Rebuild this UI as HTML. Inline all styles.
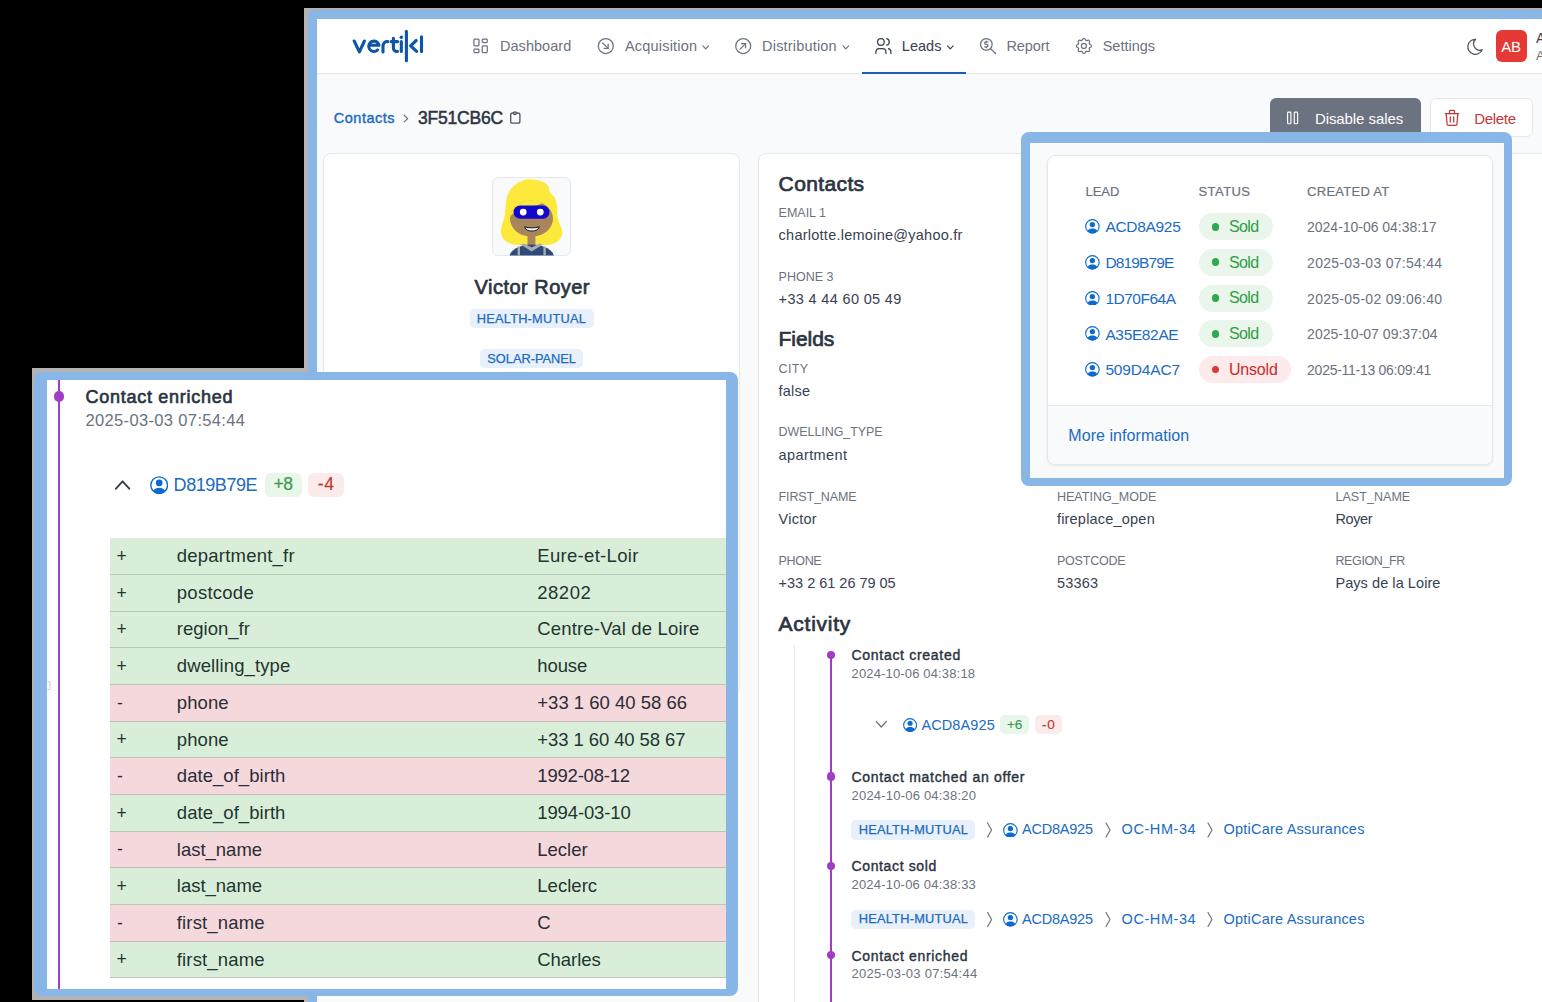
<!DOCTYPE html>
<html><head><meta charset="utf-8"><style>
html,body{margin:0;padding:0;width:1542px;height:1002px;overflow:hidden;background:#000;}
body{position:relative;font-family:"Liberation Sans",sans-serif;}
.a,.t{position:absolute;}
.t{white-space:nowrap;}
</style></head><body>
<div class="a" style="left:0.00px;top:0.00px;width:1542.00px;height:1002.00px;background:#000;"></div>
<div class="a" style="left:304.00px;top:8.00px;width:1238.00px;height:994.00px;background:#b3b3b3;"></div>
<div class="a" style="left:308.00px;top:10.00px;width:1234.00px;height:992.00px;background:#88b7e7;border-top-left-radius:5px;"></div>
<div class="a" style="left:317.00px;top:19.00px;width:1225.00px;height:983.00px;background:#f9fafb;"></div>
<div class="a" style="left:317.00px;top:19.00px;width:1225.00px;height:54.00px;background:#fff;border-bottom:1px solid #e5e7eb;"></div>
<div class="t" style="left:500.00px;top:38.63px;font-size:14.5px;line-height:14.5px;color:#6b7280;letter-spacing:0.033px;">Dashboard</div>
<div class="t" style="left:624.90px;top:38.63px;font-size:14.5px;line-height:14.5px;color:#6b7280;letter-spacing:0.208px;">Acquisition</div>
<div class="t" style="left:762.10px;top:38.63px;font-size:14.5px;line-height:14.5px;color:#6b7280;letter-spacing:0.179px;">Distribution</div>
<div class="t" style="left:901.80px;top:38.63px;font-size:14.5px;line-height:14.5px;color:#374151;letter-spacing:0.024px;">Leads</div>
<div class="t" style="left:1006.40px;top:38.63px;font-size:14.5px;line-height:14.5px;color:#6b7280;letter-spacing:-0.064px;">Report</div>
<div class="t" style="left:1102.70px;top:38.63px;font-size:14.5px;line-height:14.5px;color:#6b7280;">Settings</div>
<div class="a" style="left:861.60px;top:72.00px;width:104.60px;height:2.00px;background:#1a5fb4;"></div>
<div class="a" style="left:1495.50px;top:30.00px;width:31.80px;height:31.60px;background:#e53935;border-radius:6px;"></div>
<div class="t" style="left:1501.20px;top:39.30px;font-size:15px;line-height:15px;color:#fff;letter-spacing:-0.210px;">AB</div>
<div class="t" style="left:1536.00px;top:30.85px;font-size:14px;line-height:14px;color:#374151;">Admin</div>
<div class="t" style="left:1536.00px;top:48.60px;font-size:13px;line-height:13px;color:#6b7280;">Admin</div>
<div class="t" style="left:333.80px;top:110.53px;font-size:14.5px;line-height:14.5px;color:#1b6bbf;-webkit-text-stroke:0.4px #1b6bbf;letter-spacing:0.497px;">Contacts</div>
<div class="t" style="left:418.10px;top:109.89px;font-size:17.5px;line-height:17.5px;color:#2b3441;-webkit-text-stroke:0.5px #2b3441;letter-spacing:-0.225px;">3F51CB6C</div>
<div class="a" style="left:1269.50px;top:98.20px;width:151.50px;height:40.00px;background:#6b7280;border-radius:6px;"></div>
<div class="t" style="left:1314.90px;top:110.80px;font-size:15px;line-height:15px;color:#fff;letter-spacing:-0.076px;">Disable sales</div>
<div class="a" style="left:1429.70px;top:98.20px;width:103.20px;height:39.00px;background:#fff;border-radius:6px;box-sizing:border-box;border:1px solid #e5e7eb;"></div>
<div class="t" style="left:1474.30px;top:110.80px;font-size:15px;line-height:15px;color:#c0393b;letter-spacing:-0.331px;">Delete</div>
<div class="a" style="left:323.30px;top:152.80px;width:416.70px;height:543.20px;background:#fff;border-radius:8px;box-sizing:border-box;border:1px solid #e5e7eb;"></div>
<div class="a" style="left:492.40px;top:177.30px;width:79.00px;height:79.00px;background:#f9fafb;border-radius:6px;box-sizing:border-box;border:1px solid #e5e7eb;"></div>
<svg class="a" style="left:492.40px;top:177.30px;" width="79" height="79" viewBox="0 0 79 79"><defs><clipPath id="avc"><rect x="0.5" y="0.5" width="78" height="78" rx="5.5"/></clipPath><clipPath id="avf"><ellipse cx="39.5" cy="41.7" rx="21.6" ry="18.1"/></clipPath></defs><g clip-path="url(#avc)"><path d="M37.7 2.2 C28 2.5 18 9 15 20 C13 27 14 33 12.5 40 C11 46 7.8 52 9 57 C10.5 63 16 67 24 68 L56 68 C63 67 69.5 63 70.2 57 C70.8 51 66.5 46 65.5 40 C64.8 33 66 26 62.5 20 C60.5 17 57.3 16.5 57.3 13 C58 8 50 2.2 37.7 2.2 Z" fill="#fde93b"/><ellipse cx="39.5" cy="41.7" rx="21.5" ry="18" fill="#a9855c"/><path clip-path="url(#avf)" d="M16 44 C18 38 24 33.5 30.7 32 C38 30 44 28.5 48.3 27 C52 25.5 55 24.5 57.5 22 L58 8 L16 8 Z" fill="#fde93b"/><rect x="35.5" y="57" width="7.9" height="12" fill="#a9855c"/><ellipse cx="39.7" cy="80" rx="22.2" ry="12.5" fill="#2f4a78"/><path d="M28.5 67.6 L39.7 74.6 L51 67.6 L47.5 66.5 L39.7 70.6 L32 66.5 Z" fill="#a4abb3"/><rect x="25.6" y="69.5" width="2.4" height="10" fill="#a4abb3"/><rect x="51.4" y="69.5" width="2.4" height="10" fill="#a4abb3"/><rect x="21.5" y="28.5" width="36" height="13.2" rx="6.6" fill="#1207cc"/><circle cx="31.2" cy="35.1" r="3.4" fill="#fff"/><circle cx="48.3" cy="35.1" r="3.4" fill="#fff"/><path d="M32.6 49.8 C36.5 51.3 43.5 51.3 47.3 49.8 C46.3 55.3 33.6 55.6 32.6 49.8 Z" fill="#fff" stroke="#111" stroke-width="1"/></g></svg>
<div class="t" style="left:474.50px;top:277.07px;font-size:20px;line-height:20px;color:#2b3441;-webkit-text-stroke:0.7px #2b3441;letter-spacing:0.485px;">Victor Royer</div>
<div class="a" style="left:469.60px;top:308.90px;width:124.10px;height:19.40px;background:#e7f0fb;border-radius:5px;"></div>
<div class="t" style="left:476.80px;top:312.66px;font-size:12.8px;line-height:12.8px;color:#1b6bbf;-webkit-text-stroke:0.25px #1b6bbf;letter-spacing:0.213px;">HEALTH-MUTUAL</div>
<div class="a" style="left:480.20px;top:349.10px;width:102.70px;height:19.10px;background:#e7f0fb;border-radius:5px;"></div>
<div class="t" style="left:487.30px;top:352.76px;font-size:12.8px;line-height:12.8px;color:#1b6bbf;-webkit-text-stroke:0.25px #1b6bbf;letter-spacing:-0.008px;">SOLAR-PANEL</div>
<div class="a" style="left:757.70px;top:152.70px;width:800.00px;height:900.00px;background:#fff;border-radius:8px;box-sizing:border-box;border:1px solid #e5e7eb;"></div>
<div class="t" style="left:778.60px;top:172.62px;font-size:21px;line-height:21px;color:#2b3441;-webkit-text-stroke:0.7px #2b3441;letter-spacing:0.375px;">Contacts</div>
<div class="t" style="left:778.60px;top:206.72px;font-size:12.5px;line-height:12.5px;color:#6b7280;letter-spacing:-0.013px;">EMAIL 1</div>
<div class="t" style="left:778.60px;top:228.03px;font-size:14.5px;line-height:14.5px;color:#374151;letter-spacing:0.251px;">charlotte.lemoine@yahoo.fr</div>
<div class="t" style="left:778.60px;top:270.52px;font-size:12.5px;line-height:12.5px;color:#6b7280;">PHONE 3</div>
<div class="t" style="left:778.60px;top:291.73px;font-size:14.5px;line-height:14.5px;color:#374151;letter-spacing:0.336px;">+33 4 44 60 05 49</div>
<div class="t" style="left:778.60px;top:328.42px;font-size:21px;line-height:21px;color:#2b3441;-webkit-text-stroke:0.7px #2b3441;letter-spacing:-0.064px;">Fields</div>
<div class="t" style="left:778.60px;top:362.62px;font-size:12.5px;line-height:12.5px;color:#6b7280;letter-spacing:0.308px;">CITY</div>
<div class="t" style="left:778.60px;top:383.83px;font-size:14.5px;line-height:14.5px;color:#374151;letter-spacing:0.217px;">false</div>
<div class="t" style="left:778.60px;top:426.32px;font-size:12.5px;line-height:12.5px;color:#6b7280;letter-spacing:-0.074px;">DWELLING_TYPE</div>
<div class="t" style="left:778.60px;top:447.83px;font-size:14.5px;line-height:14.5px;color:#374151;letter-spacing:0.389px;">apartment</div>
<div class="t" style="left:778.60px;top:490.92px;font-size:12.5px;line-height:12.5px;color:#6b7280;letter-spacing:-0.142px;">FIRST_NAME</div>
<div class="t" style="left:778.60px;top:511.93px;font-size:14.5px;line-height:14.5px;color:#374151;letter-spacing:0.260px;">Victor</div>
<div class="t" style="left:1056.90px;top:490.92px;font-size:12.5px;line-height:12.5px;color:#6b7280;letter-spacing:0.037px;">HEATING_MODE</div>
<div class="t" style="left:1056.90px;top:511.93px;font-size:14.5px;line-height:14.5px;color:#374151;letter-spacing:0.206px;">fireplace_open</div>
<div class="t" style="left:1335.40px;top:490.92px;font-size:12.5px;line-height:12.5px;color:#6b7280;letter-spacing:0.059px;">LAST_NAME</div>
<div class="t" style="left:1335.40px;top:511.93px;font-size:14.5px;line-height:14.5px;color:#374151;letter-spacing:-0.370px;">Royer</div>
<div class="t" style="left:778.60px;top:554.92px;font-size:12.5px;line-height:12.5px;color:#6b7280;letter-spacing:-0.338px;">PHONE</div>
<div class="t" style="left:778.60px;top:575.93px;font-size:14.5px;line-height:14.5px;color:#374151;letter-spacing:-0.014px;">+33 2 61 26 79 05</div>
<div class="t" style="left:1056.90px;top:554.92px;font-size:12.5px;line-height:12.5px;color:#6b7280;letter-spacing:-0.193px;">POSTCODE</div>
<div class="t" style="left:1056.90px;top:575.93px;font-size:14.5px;line-height:14.5px;color:#374151;letter-spacing:0.244px;">53363</div>
<div class="t" style="left:1335.40px;top:554.92px;font-size:12.5px;line-height:12.5px;color:#6b7280;letter-spacing:-0.366px;">REGION_FR</div>
<div class="t" style="left:1335.40px;top:575.93px;font-size:14.5px;line-height:14.5px;color:#374151;letter-spacing:0.068px;">Pays de la Loire</div>
<div class="t" style="left:778.60px;top:612.62px;font-size:21px;line-height:21px;color:#2b3441;-webkit-text-stroke:0.7px #2b3441;letter-spacing:0.742px;">Activity</div>
<div class="a" style="left:794.00px;top:645.20px;width:1.00px;height:400.00px;background:#e5e7eb;"></div>
<div class="a" style="left:830.00px;top:654.70px;width:2.20px;height:400.00px;background:#a03dc2;"></div>
<div class="a" style="left:826.90px;top:650.50px;width:8.4px;height:8.4px;border-radius:50%;background:#a03dc2;"></div>
<div class="t" style="left:851.50px;top:648.15px;font-size:14px;line-height:14px;color:#2b3441;-webkit-text-stroke:0.4px #2b3441;letter-spacing:0.705px;">Contact created</div>
<div class="t" style="left:851.50px;top:666.80px;font-size:13px;line-height:13px;color:#6b7280;letter-spacing:0.155px;">2024-10-06 04:38:18</div>
<svg class="a" style="left:902.90px;top:717.60px;" width="14.2" height="14.2" viewBox="0 0 20 20"><circle cx="10" cy="10" r="9.1" fill="none" stroke="#0b6bcf" stroke-width="1.5"/><circle cx="10" cy="7.5" r="3.6" fill="#0b6bcf"/><path d="M3.3 16.2 C5 13.6 7.4 12.8 10 12.8 C12.6 12.8 15 13.6 16.7 16.2 C15 18.2 12.6 19.3 10 19.3 C7.4 19.3 5 18.2 3.3 16.2 Z" fill="#0b6bcf"/></svg>
<div class="t" style="left:921.40px;top:717.73px;font-size:14.5px;line-height:14.5px;color:#1b6bbf;letter-spacing:0.122px;">ACD8A925</div>
<div class="a" style="left:999.90px;top:715.10px;width:29.60px;height:18.90px;background:#e9f6ea;border-radius:5px;"></div>
<div class="t" style="left:1007.00px;top:718.17px;font-size:13.5px;line-height:13.5px;color:#3a9a4f;-webkit-text-stroke:0.15px #3a9a4f;letter-spacing:-0.090px;">+6</div>
<div class="a" style="left:1034.50px;top:715.10px;width:27.50px;height:18.90px;background:#fcebec;border-radius:5px;"></div>
<div class="t" style="left:1041.90px;top:718.17px;font-size:13.5px;line-height:13.5px;color:#c0392b;-webkit-text-stroke:0.15px #c0392b;letter-spacing:0.799px;">-0</div>
<div class="a" style="left:826.90px;top:772.20px;width:8.4px;height:8.4px;border-radius:50%;background:#a03dc2;"></div>
<div class="t" style="left:851.50px;top:769.85px;font-size:14px;line-height:14px;color:#2b3441;-webkit-text-stroke:0.4px #2b3441;letter-spacing:0.698px;">Contact matched an offer</div>
<div class="t" style="left:851.50px;top:788.50px;font-size:13px;line-height:13px;color:#6b7280;letter-spacing:0.210px;">2024-10-06 04:38:20</div>
<div class="a" style="left:851.30px;top:820.20px;width:124.00px;height:19.60px;background:#e7f0fb;border-radius:5px;"></div>
<div class="t" style="left:858.70px;top:823.56px;font-size:12.8px;line-height:12.8px;color:#1b6bbf;-webkit-text-stroke:0.25px #1b6bbf;letter-spacing:0.238px;">HEALTH-MUTUAL</div>
<svg class="a" style="left:1003.20px;top:822.60px;" width="14.8" height="14.8" viewBox="0 0 20 20"><circle cx="10" cy="10" r="9.1" fill="none" stroke="#0b6bcf" stroke-width="1.5"/><circle cx="10" cy="7.5" r="3.6" fill="#0b6bcf"/><path d="M3.3 16.2 C5 13.6 7.4 12.8 10 12.8 C12.6 12.8 15 13.6 16.7 16.2 C15 18.2 12.6 19.3 10 19.3 C7.4 19.3 5 18.2 3.3 16.2 Z" fill="#0b6bcf"/></svg>
<div class="t" style="left:1022.00px;top:822.43px;font-size:14.5px;line-height:14.5px;color:#1b6bbf;letter-spacing:-0.221px;">ACD8A925</div>
<div class="t" style="left:1121.60px;top:822.43px;font-size:14.5px;line-height:14.5px;color:#1b6bbf;letter-spacing:0.559px;">OC-HM-34</div>
<div class="t" style="left:1223.60px;top:822.43px;font-size:14.5px;line-height:14.5px;color:#1b6bbf;letter-spacing:0.211px;">OptiCare Assurances</div>
<div class="a" style="left:826.90px;top:861.60px;width:8.4px;height:8.4px;border-radius:50%;background:#a03dc2;"></div>
<div class="t" style="left:851.50px;top:859.25px;font-size:14px;line-height:14px;color:#2b3441;-webkit-text-stroke:0.4px #2b3441;letter-spacing:0.635px;">Contact sold</div>
<div class="t" style="left:851.50px;top:877.90px;font-size:13px;line-height:13px;color:#6b7280;letter-spacing:0.199px;">2024-10-06 04:38:33</div>
<div class="a" style="left:851.30px;top:909.70px;width:124.00px;height:19.60px;background:#e7f0fb;border-radius:5px;"></div>
<div class="t" style="left:858.70px;top:913.06px;font-size:12.8px;line-height:12.8px;color:#1b6bbf;-webkit-text-stroke:0.25px #1b6bbf;letter-spacing:0.238px;">HEALTH-MUTUAL</div>
<svg class="a" style="left:1003.20px;top:912.10px;" width="14.8" height="14.8" viewBox="0 0 20 20"><circle cx="10" cy="10" r="9.1" fill="none" stroke="#0b6bcf" stroke-width="1.5"/><circle cx="10" cy="7.5" r="3.6" fill="#0b6bcf"/><path d="M3.3 16.2 C5 13.6 7.4 12.8 10 12.8 C12.6 12.8 15 13.6 16.7 16.2 C15 18.2 12.6 19.3 10 19.3 C7.4 19.3 5 18.2 3.3 16.2 Z" fill="#0b6bcf"/></svg>
<div class="t" style="left:1022.00px;top:911.93px;font-size:14.5px;line-height:14.5px;color:#1b6bbf;letter-spacing:-0.221px;">ACD8A925</div>
<div class="t" style="left:1121.60px;top:911.93px;font-size:14.5px;line-height:14.5px;color:#1b6bbf;letter-spacing:0.559px;">OC-HM-34</div>
<div class="t" style="left:1223.60px;top:911.93px;font-size:14.5px;line-height:14.5px;color:#1b6bbf;letter-spacing:0.211px;">OptiCare Assurances</div>
<div class="a" style="left:826.90px;top:951.10px;width:8.4px;height:8.4px;border-radius:50%;background:#a03dc2;"></div>
<div class="t" style="left:851.50px;top:948.75px;font-size:14px;line-height:14px;color:#2b3441;-webkit-text-stroke:0.4px #2b3441;letter-spacing:0.677px;">Contact enriched</div>
<div class="t" style="left:851.50px;top:967.40px;font-size:13px;line-height:13px;color:#6b7280;letter-spacing:0.277px;">2025-03-03 07:54:44</div>
<svg class="a" style="left:0;top:0" width="1542" height="1002"><g fill="none" stroke="#0b56a5" stroke-width="3.1" stroke-linecap="round" stroke-linejoin="round"><path d="M354.2 41 L359.4 51.9 L364.4 41"/><path d="M371 45.3 H379 A5.2 5.2 0 1 0 377.6 50"/><path d="M383 52 V45.8 A4.2 4.2 0 0 1 387.8 41.6"/><path d="M393.4 38.3 V48.3 A3.2 3.2 0 0 0 397.4 51.4 M391.2 41.6 H397.6"/><path d="M401.3 41.6 V51.5"/><path d="M406.4 31.2 V60.8"/><path d="M416.2 40.5 L410.6 45.8 L416.6 51.4"/><path d="M421.5 36.8 V51.6"/></g><circle cx="401.3" cy="37.3" r="1.7" fill="#0b56a5"/><g transform="translate(470.6,35.85) scale(0.8333333333333334)" fill="none" stroke="#6b7280" stroke-width="1.5" stroke-linecap="round" stroke-linejoin="round"><path d="M5 4h4a1 1 0 0 1 1 1v6a1 1 0 0 1 -1 1h-4a1 1 0 0 1 -1 -1v-6a1 1 0 0 1 1 -1"/><path d="M5 16h4a1 1 0 0 1 1 1v2a1 1 0 0 1 -1 1h-4a1 1 0 0 1 -1 -1v-2a1 1 0 0 1 1 -1"/><path d="M15 12h4a1 1 0 0 1 1 1v6a1 1 0 0 1 -1 1h-4a1 1 0 0 1 -1 -1v-6a1 1 0 0 1 1 -1"/><path d="M15 4h4a1 1 0 0 1 1 1v2a1 1 0 0 1 -1 1h-4a1 1 0 0 1 -1 -1v-2a1 1 0 0 1 1 -1"/></g><g transform="translate(595.8,36) scale(0.8333333333333334)" fill="none" stroke="#6b7280" stroke-width="1.5" stroke-linecap="round" stroke-linejoin="round"><circle cx="12" cy="12" r="9"/><path d="M8.2 8.2l6.6 6.6"/><path d="M14.8 10v4.8h-4.8"/></g><g transform="translate(733.2,36) scale(0.8333333333333334)" fill="none" stroke="#6b7280" stroke-width="1.5" stroke-linecap="round" stroke-linejoin="round"><circle cx="12" cy="12" r="9"/><path d="M8.2 15.8l6.6 -6.6"/><path d="M10 9.2h4.8v4.8"/></g><g transform="translate(873.4,36.1) scale(0.8333333333333334)" fill="none" stroke="#374151" stroke-width="1.5" stroke-linecap="round" stroke-linejoin="round"><circle cx="9" cy="7" r="4"/><path d="M3 21v-2a4 4 0 0 1 4 -4h4a4 4 0 0 1 4 4v2"/><path d="M16 3.13a4 4 0 0 1 0 7.75"/><path d="M21 21v-2a4 4 0 0 0 -3 -3.85"/></g><g transform="translate(978,36) scale(0.8333333333333334)" fill="none" stroke="#6b7280" stroke-width="1.5" stroke-linecap="round" stroke-linejoin="round"><circle cx="10" cy="10" r="7"/><path d="M21 21l-6 -6"/><path d="M12 7h-2.5a1.5 1.5 0 0 0 0 3h1a1.5 1.5 0 0 1 0 3h-2.5"/><path d="M10 13v1m0 -8v1"/></g><g transform="translate(1073.9,35.9) scale(0.8333333333333334)" fill="none" stroke="#6b7280" stroke-width="1.5" stroke-linecap="round" stroke-linejoin="round"><path d="M10.325 4.317c.426 -1.756 2.924 -1.756 3.35 0a1.724 1.724 0 0 0 2.573 1.066c1.543 -.94 3.31 .826 2.37 2.37a1.724 1.724 0 0 0 1.065 2.572c1.756 .426 1.756 2.924 0 3.35a1.724 1.724 0 0 0 -1.066 2.573c.94 1.543 -.826 3.31 -2.37 2.37a1.724 1.724 0 0 0 -2.572 1.065c-.426 1.756 -2.924 1.756 -3.35 0a1.724 1.724 0 0 0 -2.573 -1.066c-1.543 .94 -3.31 -.826 -2.37 -2.37a1.724 1.724 0 0 0 -1.065 -2.572c-1.756 -.426 -1.756 -2.924 0 -3.35a1.724 1.724 0 0 0 1.066 -2.573c-.94 -1.543 .826 -3.31 2.37 -2.37c1 .608 2.296 .07 2.572 -1.065z"/><circle cx="12" cy="12" r="3"/></g><g transform="translate(1465.3,36.8) scale(0.8333333333333334)" fill="none" stroke="#4b5563" stroke-width="1.5" stroke-linecap="round" stroke-linejoin="round"><path d="M12 3c.132 0 .263 0 .393 0a7.5 7.5 0 0 0 7.92 12.446a9 9 0 1 1 -8.313 -12.454z"/></g><path d="M702.9 45.9 L705.6999999999999 48.8 L708.5 45.9" fill="none" stroke="#6b7280" stroke-width="1.2" stroke-linecap="round" stroke-linejoin="round"/><path d="M843.0 45.9 L845.8 48.8 L848.6 45.9" fill="none" stroke="#6b7280" stroke-width="1.2" stroke-linecap="round" stroke-linejoin="round"/><path d="M947.5 45.9 L950.3 48.8 L953.1 45.9" fill="none" stroke="#374151" stroke-width="1.2" stroke-linecap="round" stroke-linejoin="round"/><path d="M404.2 115.3 L407.6 118.6 L404.2 121.9" fill="none" stroke="#6b7280" stroke-width="1.3" stroke-linecap="round" stroke-linejoin="round"/><g fill="none" stroke="#4b5563" stroke-width="1.3"><rect x="510.7" y="113" width="9.2" height="10.2" rx="2"/><circle cx="514.9" cy="113.3" r="1.4" fill="#d1d5db"/></g><g transform="translate(1282.6,107.9) scale(0.8333333333333334)" fill="none" stroke="#fff" stroke-width="1.4" stroke-linecap="round" stroke-linejoin="round"><path d="M7 5h2a1 1 0 0 1 1 1v12a1 1 0 0 1 -1 1h-2a1 1 0 0 1 -1 -1v-12a1 1 0 0 1 1 -1z"/><path d="M15 5h2a1 1 0 0 1 1 1v12a1 1 0 0 1 -1 1h-2a1 1 0 0 1 -1 -1v-12a1 1 0 0 1 1 -1z"/></g><g transform="translate(1442,107.8) scale(0.8333333333333334)" fill="none" stroke="#c0393b" stroke-width="1.5" stroke-linecap="round" stroke-linejoin="round"><path d="M4 7l16 0"/><path d="M10 11l0 6"/><path d="M14 11l0 6"/><path d="M5 7l1 12a2 2 0 0 0 2 2h8a2 2 0 0 0 2 -2l1 -12"/><path d="M9 7v-3a1 1 0 0 1 1 -1h4a1 1 0 0 1 1 1v3"/></g><path d="M876.2 721.4 L881.3000000000001 727.0 L886.4000000000001 721.4" fill="none" stroke="#6b7280" stroke-width="1.4" stroke-linecap="round" stroke-linejoin="round"/><path d="M987.6 823 L991.6 830 L987.6 837" fill="none" stroke="#6b7280" stroke-width="1.2" stroke-linecap="round" stroke-linejoin="round"/><path d="M1106 823 L1110 830 L1106 837" fill="none" stroke="#6b7280" stroke-width="1.2" stroke-linecap="round" stroke-linejoin="round"/><path d="M1208 823 L1212 830 L1208 837" fill="none" stroke="#6b7280" stroke-width="1.2" stroke-linecap="round" stroke-linejoin="round"/><path d="M987.6 912.5 L991.6 919.5 L987.6 926.5" fill="none" stroke="#6b7280" stroke-width="1.2" stroke-linecap="round" stroke-linejoin="round"/><path d="M1106 912.5 L1110 919.5 L1106 926.5" fill="none" stroke="#6b7280" stroke-width="1.2" stroke-linecap="round" stroke-linejoin="round"/><path d="M1208 912.5 L1212 919.5 L1208 926.5" fill="none" stroke="#6b7280" stroke-width="1.2" stroke-linecap="round" stroke-linejoin="round"/></svg>
<div class="a" style="left:1021.00px;top:132.00px;width:491.00px;height:354.00px;background:#88b7e7;border-radius:8px;"></div>
<div class="a" style="left:1030.00px;top:143.00px;width:474.00px;height:335.00px;background:#f8fafc;"></div>
<div class="a" style="left:1046.50px;top:154.50px;width:446.00px;height:310.50px;background:#fff;border-radius:8px;box-sizing:border-box;border:1px solid #e5e7eb;box-shadow:0 1px 3px rgba(0,0,0,0.08);overflow:hidden;"></div>
<div class="a" style="left:1047.50px;top:405.00px;width:444.00px;height:59.00px;background:#f9fafb;border-bottom-left-radius:7px;border-bottom-right-radius:7px;"></div>
<div class="a" style="left:1047.50px;top:405.00px;width:444.00px;height:1.00px;background:#e5e7eb;"></div>
<div class="t" style="left:1085.50px;top:184.50px;font-size:13px;line-height:13px;color:#6b7280;-webkit-text-stroke:0.2px #6b7280;letter-spacing:-0.054px;">LEAD</div>
<div class="t" style="left:1198.50px;top:184.50px;font-size:13px;line-height:13px;color:#6b7280;-webkit-text-stroke:0.2px #6b7280;letter-spacing:0.429px;">STATUS</div>
<div class="t" style="left:1307.10px;top:184.50px;font-size:13px;line-height:13px;color:#6b7280;-webkit-text-stroke:0.2px #6b7280;letter-spacing:0.256px;">CREATED AT</div>
<svg class="a" style="left:1085.20px;top:219.30px;" width="14.8" height="14.8" viewBox="0 0 20 20"><circle cx="10" cy="10" r="9.1" fill="none" stroke="#0b6bcf" stroke-width="1.5"/><circle cx="10" cy="7.5" r="3.6" fill="#0b6bcf"/><path d="M3.3 16.2 C5 13.6 7.4 12.8 10 12.8 C12.6 12.8 15 13.6 16.7 16.2 C15 18.2 12.6 19.3 10 19.3 C7.4 19.3 5 18.2 3.3 16.2 Z" fill="#0b6bcf"/></svg>
<div class="t" style="left:1105.40px;top:219.48px;font-size:15.5px;line-height:15.5px;color:#1b6bbf;letter-spacing:-0.307px;">ACD8A925</div>
<div class="a" style="left:1198.50px;top:213.20px;width:74.20px;height:27.00px;background:#eaf6eb;border-radius:13.5px;"></div>
<div class="a" style="left:1211.50px;top:222.80px;width:7.8px;height:7.8px;border-radius:50%;background:#2fa84f;"></div>
<div class="t" style="left:1228.90px;top:219.06px;font-size:16px;line-height:16px;color:#2f9e44;letter-spacing:-0.575px;">Sold</div>
<div class="t" style="left:1307.10px;top:220.25px;font-size:14px;line-height:14px;color:#6b7280;letter-spacing:-0.028px;">2024-10-06 04:38:17</div>
<svg class="a" style="left:1085.20px;top:254.98px;" width="14.8" height="14.8" viewBox="0 0 20 20"><circle cx="10" cy="10" r="9.1" fill="none" stroke="#0b6bcf" stroke-width="1.5"/><circle cx="10" cy="7.5" r="3.6" fill="#0b6bcf"/><path d="M3.3 16.2 C5 13.6 7.4 12.8 10 12.8 C12.6 12.8 15 13.6 16.7 16.2 C15 18.2 12.6 19.3 10 19.3 C7.4 19.3 5 18.2 3.3 16.2 Z" fill="#0b6bcf"/></svg>
<div class="t" style="left:1105.40px;top:255.16px;font-size:15.5px;line-height:15.5px;color:#1b6bbf;letter-spacing:-0.853px;">D819B79E</div>
<div class="a" style="left:1198.50px;top:248.88px;width:74.20px;height:27.00px;background:#eaf6eb;border-radius:13.5px;"></div>
<div class="a" style="left:1211.50px;top:258.48px;width:7.8px;height:7.8px;border-radius:50%;background:#2fa84f;"></div>
<div class="t" style="left:1228.90px;top:254.74px;font-size:16px;line-height:16px;color:#2f9e44;letter-spacing:-0.575px;">Sold</div>
<div class="t" style="left:1307.10px;top:255.93px;font-size:14px;line-height:14px;color:#6b7280;letter-spacing:0.278px;">2025-03-03 07:54:44</div>
<svg class="a" style="left:1085.20px;top:290.66px;" width="14.8" height="14.8" viewBox="0 0 20 20"><circle cx="10" cy="10" r="9.1" fill="none" stroke="#0b6bcf" stroke-width="1.5"/><circle cx="10" cy="7.5" r="3.6" fill="#0b6bcf"/><path d="M3.3 16.2 C5 13.6 7.4 12.8 10 12.8 C12.6 12.8 15 13.6 16.7 16.2 C15 18.2 12.6 19.3 10 19.3 C7.4 19.3 5 18.2 3.3 16.2 Z" fill="#0b6bcf"/></svg>
<div class="t" style="left:1105.40px;top:290.84px;font-size:15.5px;line-height:15.5px;color:#1b6bbf;letter-spacing:-0.487px;">1D70F64A</div>
<div class="a" style="left:1198.50px;top:284.56px;width:74.20px;height:27.00px;background:#eaf6eb;border-radius:13.5px;"></div>
<div class="a" style="left:1211.50px;top:294.16px;width:7.8px;height:7.8px;border-radius:50%;background:#2fa84f;"></div>
<div class="t" style="left:1228.90px;top:290.42px;font-size:16px;line-height:16px;color:#2f9e44;letter-spacing:-0.575px;">Sold</div>
<div class="t" style="left:1307.10px;top:291.61px;font-size:14px;line-height:14px;color:#6b7280;letter-spacing:0.278px;">2025-05-02 09:06:40</div>
<svg class="a" style="left:1085.20px;top:326.34px;" width="14.8" height="14.8" viewBox="0 0 20 20"><circle cx="10" cy="10" r="9.1" fill="none" stroke="#0b6bcf" stroke-width="1.5"/><circle cx="10" cy="7.5" r="3.6" fill="#0b6bcf"/><path d="M3.3 16.2 C5 13.6 7.4 12.8 10 12.8 C12.6 12.8 15 13.6 16.7 16.2 C15 18.2 12.6 19.3 10 19.3 C7.4 19.3 5 18.2 3.3 16.2 Z" fill="#0b6bcf"/></svg>
<div class="t" style="left:1105.40px;top:326.52px;font-size:15.5px;line-height:15.5px;color:#1b6bbf;letter-spacing:-0.362px;">A35E82AE</div>
<div class="a" style="left:1198.50px;top:320.24px;width:74.20px;height:27.00px;background:#eaf6eb;border-radius:13.5px;"></div>
<div class="a" style="left:1211.50px;top:329.84px;width:7.8px;height:7.8px;border-radius:50%;background:#2fa84f;"></div>
<div class="t" style="left:1228.90px;top:326.10px;font-size:16px;line-height:16px;color:#2f9e44;letter-spacing:-0.575px;">Sold</div>
<div class="t" style="left:1307.10px;top:327.29px;font-size:14px;line-height:14px;color:#6b7280;letter-spacing:0.022px;">2025-10-07 09:37:04</div>
<svg class="a" style="left:1085.20px;top:362.02px;" width="14.8" height="14.8" viewBox="0 0 20 20"><circle cx="10" cy="10" r="9.1" fill="none" stroke="#0b6bcf" stroke-width="1.5"/><circle cx="10" cy="7.5" r="3.6" fill="#0b6bcf"/><path d="M3.3 16.2 C5 13.6 7.4 12.8 10 12.8 C12.6 12.8 15 13.6 16.7 16.2 C15 18.2 12.6 19.3 10 19.3 C7.4 19.3 5 18.2 3.3 16.2 Z" fill="#0b6bcf"/></svg>
<div class="t" style="left:1105.40px;top:362.20px;font-size:15.5px;line-height:15.5px;color:#1b6bbf;letter-spacing:-0.147px;">509D4AC7</div>
<div class="a" style="left:1198.70px;top:355.92px;width:91.90px;height:27.00px;background:#fdeaea;border-radius:13.5px;"></div>
<div class="a" style="left:1211.50px;top:365.52px;width:7.8px;height:7.8px;border-radius:50%;background:#d63b3b;"></div>
<div class="t" style="left:1228.90px;top:361.78px;font-size:16px;line-height:16px;color:#c92a2a;letter-spacing:-0.162px;">Unsold</div>
<div class="t" style="left:1307.10px;top:362.97px;font-size:14px;line-height:14px;color:#6b7280;letter-spacing:-0.270px;">2025-11-13 06:09:41</div>
<div class="t" style="left:1068.30px;top:427.76px;font-size:16px;line-height:16px;color:#1b6bbf;letter-spacing:0.057px;">More information</div>
<div class="a" style="left:32.00px;top:368.00px;width:276.00px;height:632.00px;background:#b3b3b3;"></div>
<div class="a" style="left:34.00px;top:372.00px;width:704.00px;height:624.00px;background:#88b7e7;border-radius:8px;"></div>
<div class="a" style="left:47.00px;top:380.00px;width:679.00px;height:609.00px;background:#fff;"></div>
<div class="a" style="left:58.10px;top:380.00px;width:2.40px;height:609.00px;background:#a03dc2;"></div>
<div class="a" style="left:54.10px;top:391.30px;width:10.4px;height:10.4px;border-radius:50%;background:#a03dc2;"></div>
<div class="t" style="left:85.50px;top:387.66px;font-size:18px;line-height:18px;color:#2b3441;-webkit-text-stroke:0.65px #2b3441;letter-spacing:0.728px;">Contact enriched</div>
<div class="t" style="left:85.50px;top:411.83px;font-size:16.5px;line-height:16.5px;color:#6b7280;letter-spacing:0.349px;">2025-03-03 07:54:44</div>
<svg class="a" style="left:150.00px;top:475.60px;" width="18.4" height="18.4" viewBox="0 0 20 20"><circle cx="10" cy="10" r="9.1" fill="none" stroke="#0b6bcf" stroke-width="1.5"/><circle cx="10" cy="7.5" r="3.6" fill="#0b6bcf"/><path d="M3.3 16.2 C5 13.6 7.4 12.8 10 12.8 C12.6 12.8 15 13.6 16.7 16.2 C15 18.2 12.6 19.3 10 19.3 C7.4 19.3 5 18.2 3.3 16.2 Z" fill="#0b6bcf"/></svg>
<div class="t" style="left:173.60px;top:475.76px;font-size:18px;line-height:18px;color:#1b6bbf;letter-spacing:-0.438px;">D819B79E</div>
<div class="a" style="left:264.50px;top:472.70px;width:37.80px;height:24.50px;background:#e9f6ea;border-radius:6px;"></div>
<div class="t" style="left:273.60px;top:476.19px;font-size:17.5px;line-height:17.5px;color:#3a9a4f;-webkit-text-stroke:0.2px #3a9a4f;letter-spacing:-0.450px;">+8</div>
<div class="a" style="left:308.00px;top:472.70px;width:35.90px;height:24.50px;background:#fcebec;border-radius:6px;"></div>
<div class="t" style="left:317.80px;top:476.19px;font-size:17.5px;line-height:17.5px;color:#c0392b;-webkit-text-stroke:0.2px #c0392b;letter-spacing:0.543px;">-4</div>
<div class="a" style="left:110.00px;top:538.20px;width:616.00px;height:36.69px;background:#d9eed9;box-sizing:border-box;border-bottom:1.5px solid #b5c9b6;"></div>
<div class="t" style="left:116.50px;top:547.89px;font-size:17.5px;line-height:17.5px;color:#1f3530;">+</div>
<div class="t" style="left:176.80px;top:547.04px;font-size:18.5px;line-height:18.5px;color:#1f3530;letter-spacing:0.219px;">department_fr</div>
<div class="t" style="left:537.30px;top:547.04px;font-size:18.5px;line-height:18.5px;color:#1f3530;letter-spacing:0.302px;">Eure-et-Loir</div>
<div class="a" style="left:110.00px;top:574.89px;width:616.00px;height:36.69px;background:#d9eed9;box-sizing:border-box;border-bottom:1.5px solid #b5c9b6;"></div>
<div class="t" style="left:116.50px;top:584.58px;font-size:17.5px;line-height:17.5px;color:#1f3530;">+</div>
<div class="t" style="left:176.80px;top:583.73px;font-size:18.5px;line-height:18.5px;color:#1f3530;letter-spacing:0.260px;">postcode</div>
<div class="t" style="left:537.30px;top:583.73px;font-size:18.5px;line-height:18.5px;color:#1f3530;letter-spacing:0.488px;">28202</div>
<div class="a" style="left:110.00px;top:611.58px;width:616.00px;height:36.69px;background:#d9eed9;box-sizing:border-box;border-bottom:1.5px solid #b5c9b6;"></div>
<div class="t" style="left:116.50px;top:621.27px;font-size:17.5px;line-height:17.5px;color:#1f3530;">+</div>
<div class="t" style="left:176.80px;top:620.42px;font-size:18.5px;line-height:18.5px;color:#1f3530;letter-spacing:-0.002px;">region_fr</div>
<div class="t" style="left:537.30px;top:620.42px;font-size:18.5px;line-height:18.5px;color:#1f3530;letter-spacing:0.164px;">Centre-Val de Loire</div>
<div class="a" style="left:110.00px;top:648.28px;width:616.00px;height:36.69px;background:#d9eed9;box-sizing:border-box;border-bottom:1.5px solid #b5c9b6;"></div>
<div class="t" style="left:116.50px;top:657.96px;font-size:17.5px;line-height:17.5px;color:#1f3530;">+</div>
<div class="t" style="left:176.80px;top:657.11px;font-size:18.5px;line-height:18.5px;color:#1f3530;letter-spacing:0.117px;">dwelling_type</div>
<div class="t" style="left:537.30px;top:657.11px;font-size:18.5px;line-height:18.5px;color:#1f3530;letter-spacing:-0.101px;">house</div>
<div class="a" style="left:110.00px;top:684.97px;width:616.00px;height:36.69px;background:#f5d8db;box-sizing:border-box;border-bottom:1.5px solid #cdb6b9;"></div>
<div class="t" style="left:117.00px;top:694.65px;font-size:17.5px;line-height:17.5px;color:#2b2d38;">-</div>
<div class="t" style="left:176.80px;top:693.81px;font-size:18.5px;line-height:18.5px;color:#2b2d38;letter-spacing:0.088px;">phone</div>
<div class="t" style="left:537.30px;top:693.81px;font-size:18.5px;line-height:18.5px;color:#2b2d38;letter-spacing:0.001px;">+33 1 60 40 58 66</div>
<div class="a" style="left:110.00px;top:721.66px;width:616.00px;height:36.69px;background:#d9eed9;box-sizing:border-box;border-bottom:1.5px solid #b5c9b6;"></div>
<div class="t" style="left:116.50px;top:731.34px;font-size:17.5px;line-height:17.5px;color:#1f3530;">+</div>
<div class="t" style="left:176.80px;top:730.50px;font-size:18.5px;line-height:18.5px;color:#1f3530;letter-spacing:0.088px;">phone</div>
<div class="t" style="left:537.30px;top:730.50px;font-size:18.5px;line-height:18.5px;color:#1f3530;letter-spacing:-0.093px;">+33 1 60 40 58 67</div>
<div class="a" style="left:110.00px;top:758.35px;width:616.00px;height:36.69px;background:#f5d8db;box-sizing:border-box;border-bottom:1.5px solid #cdb6b9;"></div>
<div class="t" style="left:117.00px;top:768.04px;font-size:17.5px;line-height:17.5px;color:#2b2d38;">-</div>
<div class="t" style="left:176.80px;top:767.19px;font-size:18.5px;line-height:18.5px;color:#2b2d38;letter-spacing:0.050px;">date_of_birth</div>
<div class="t" style="left:537.30px;top:767.19px;font-size:18.5px;line-height:18.5px;color:#2b2d38;letter-spacing:-0.204px;">1992-08-12</div>
<div class="a" style="left:110.00px;top:795.04px;width:616.00px;height:36.69px;background:#d9eed9;box-sizing:border-box;border-bottom:1.5px solid #b5c9b6;"></div>
<div class="t" style="left:116.50px;top:804.73px;font-size:17.5px;line-height:17.5px;color:#1f3530;">+</div>
<div class="t" style="left:176.80px;top:803.88px;font-size:18.5px;line-height:18.5px;color:#1f3530;letter-spacing:0.050px;">date_of_birth</div>
<div class="t" style="left:537.30px;top:803.88px;font-size:18.5px;line-height:18.5px;color:#1f3530;letter-spacing:-0.137px;">1994-03-10</div>
<div class="a" style="left:110.00px;top:831.73px;width:616.00px;height:36.69px;background:#f5d8db;box-sizing:border-box;border-bottom:1.5px solid #cdb6b9;"></div>
<div class="t" style="left:117.00px;top:841.42px;font-size:17.5px;line-height:17.5px;color:#2b2d38;">-</div>
<div class="t" style="left:176.80px;top:840.57px;font-size:18.5px;line-height:18.5px;color:#2b2d38;letter-spacing:-0.007px;">last_name</div>
<div class="t" style="left:537.30px;top:840.57px;font-size:18.5px;line-height:18.5px;color:#2b2d38;letter-spacing:-0.017px;">Lecler</div>
<div class="a" style="left:110.00px;top:868.42px;width:616.00px;height:36.69px;background:#d9eed9;box-sizing:border-box;border-bottom:1.5px solid #b5c9b6;"></div>
<div class="t" style="left:116.50px;top:878.11px;font-size:17.5px;line-height:17.5px;color:#1f3530;">+</div>
<div class="t" style="left:176.80px;top:877.26px;font-size:18.5px;line-height:18.5px;color:#1f3530;letter-spacing:-0.007px;">last_name</div>
<div class="t" style="left:537.30px;top:877.26px;font-size:18.5px;line-height:18.5px;color:#1f3530;letter-spacing:0.028px;">Leclerc</div>
<div class="a" style="left:110.00px;top:905.12px;width:616.00px;height:36.69px;background:#f5d8db;box-sizing:border-box;border-bottom:1.5px solid #cdb6b9;"></div>
<div class="t" style="left:117.00px;top:914.80px;font-size:17.5px;line-height:17.5px;color:#2b2d38;">-</div>
<div class="t" style="left:176.80px;top:913.96px;font-size:18.5px;line-height:18.5px;color:#2b2d38;letter-spacing:0.148px;">first_name</div>
<div class="t" style="left:537.30px;top:913.96px;font-size:18.5px;line-height:18.5px;color:#2b2d38;">C</div>
<div class="a" style="left:110.00px;top:941.81px;width:616.00px;height:36.69px;background:#d9eed9;box-sizing:border-box;border-bottom:1.5px solid #b5c9b6;"></div>
<div class="t" style="left:116.50px;top:951.49px;font-size:17.5px;line-height:17.5px;color:#1f3530;">+</div>
<div class="t" style="left:176.80px;top:950.65px;font-size:18.5px;line-height:18.5px;color:#1f3530;letter-spacing:0.148px;">first_name</div>
<div class="t" style="left:537.30px;top:950.65px;font-size:18.5px;line-height:18.5px;color:#1f3530;letter-spacing:-0.058px;">Charles</div>
<svg class="a" style="left:0;top:0" width="1542" height="1002"><path d="M115.9 488.7 L122.60000000000001 481.3 L129.3 488.7" fill="none" stroke="#374151" stroke-width="1.9" stroke-linecap="round" stroke-linejoin="round"/><path d="M47.5 681.5 H49 a1 1 0 0 1 1 1 V688.5 a1 1 0 0 1 -1 1 H47.5" fill="none" stroke="#c8c8c8" stroke-width="1"/></svg>
</body></html>
